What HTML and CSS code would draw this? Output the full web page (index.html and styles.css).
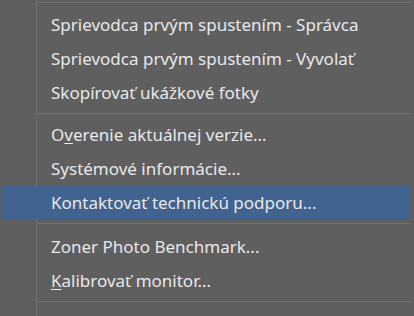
FILE: index.html
```html
<!DOCTYPE html>
<html lang="sk">
<head>
  <meta charset="UTF-8">
  <title>Pomocník</title>
  <link rel="stylesheet" href="styles.css">
</head>
<body>
  <div class="menu">
    <div class="sep first"></div>
    <div class="item">Sprievodca prvým spustením - Správca</div>
    <div class="item">Sprievodca prvým spustením - Vyvolať</div>
    <div class="item">Skopírovať ukážkové fotky</div>
    <div class="sep"></div>
    <div class="item">O<u>v</u>erenie aktuálnej verzie...</div>
    <div class="item">Systémové informácie...</div>
    <div class="item active">Kontaktovať technickú podporu...</div>
    <div class="sep wide"></div>
    <div class="item">Zoner Photo Benchmark...</div>
    <div class="item"><u>K</u>alibrovať monitor...</div>
    <div class="sep"></div>
  </div>
</body>
</html>
```

FILE: styles.css
```css
body { margin: 0; background: #5f5f5f; font-family: "Noto Sans", sans-serif; }
.menu {
  display: flex;
  flex-direction: column;
  height: 316px;
  overflow: hidden;
  background: #5f5f5f linear-gradient(to right, transparent 36px, #6c6c6c 36px, #6c6c6c 37px, transparent 37px);
}
.item {
  height: 34px;
  line-height: 34px;
  margin: 0 4px 0 1px;
  padding-left: 50px;
  color: #e8e8ea;
  font-size: 17px;
  white-space: nowrap;
}
.item u { text-underline-offset: 2px; }
.item.active { background: #41638f; }
.sep {
  height: 1px;
  margin: 3px 4px 4px 37px;
  background: #727272;
}
.sep.first { margin-top: 2px; margin-bottom: 5px; }
.sep.wide { margin-bottom: 6px; }
```
